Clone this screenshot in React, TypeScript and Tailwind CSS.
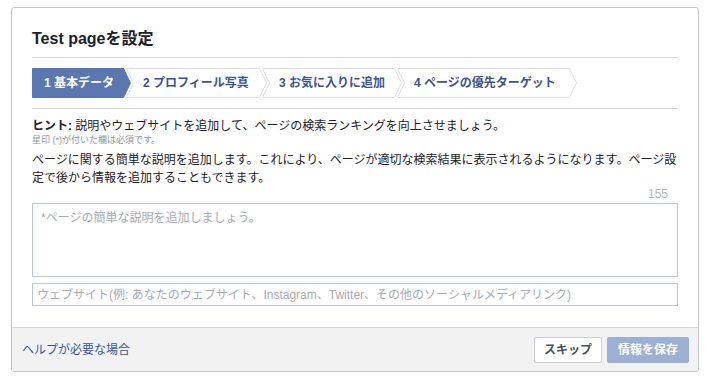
import React from "react";

type Step = { label: string; width: number };

const steps: Step[] = [
  { label: "1 基本データ", width: 99 },
  { label: "2 プロフィール写真", width: 141 },
  { label: "3 お気に入りに追加", width: 140 },
  { label: "4 ページの優先ターゲット", width: 180 },
];

const font = { fontFamily: '"Liberation Sans", Arial, "Noto Sans CJK JP", sans-serif' };

function StepShape({ width, first, active }: { width: number; first: boolean; active: boolean }) {
  const w = width;
  const pts = first
    ? `0.5,0.5 ${w - 7.5},0.5 ${w - 0.5},15 ${w - 7.5},29.5 0.5,29.5`
    : `0.5,0.5 ${w - 7.5},0.5 ${w - 0.5},15 ${w - 7.5},29.5 0.5,29.5 7.5,15`;
  return (
    <svg className="absolute inset-0" width={w} height={30} viewBox={`0 0 ${w} 30`}>
      <polygon
        points={pts}
        fill={active ? "#5b77b0" : "#ffffff"}
        stroke={active ? "#5b77b0" : "#dddfe2"}
        strokeWidth={1}
      />
    </svg>
  );
}

export default function App() {
  return (
    <div className="min-h-[384px] bg-white pl-[11px] pt-[7px]" style={font}>
      <div className="w-[688px] overflow-hidden rounded-[3px] border border-[#c5c6c8] bg-white">
        <div className="px-[20px]">
          <h1 className="border-b border-[#d3d6db] pb-[8px] pt-[21px] text-[16px] font-bold leading-[20px] text-[#1d2129]">
            Test pageを設定
          </h1>

          <div className="flex border-b border-[#d3d6db] pb-[10px] pt-[10px]">
            {steps.map((s, i) => (
              <div
                key={s.label}
                className={`relative flex h-[30px] shrink-0 items-center ${i === 0 ? "pl-[12px]" : "-ml-[5px] pl-[17px]"}`}
                style={{ width: s.width }}
              >
                <StepShape width={s.width} first={i === 0} active={i === 0} />
                <span
                  className={`relative whitespace-nowrap text-[12px] font-bold ${i === 0 ? "text-white" : "text-[#3f5488]"}`}
                >
                  {s.label}
                </span>
              </div>
            ))}
          </div>

          <p className="mt-[10px] text-[12px] leading-[15px] text-[#1d2129]">
            <span className="font-bold">ヒント:</span> 説明やウェブサイトを追加して、ページの検索ランキングを向上させましょう。
          </p>
          <p className="text-[9px] leading-[12px] text-[#90949c]">星印 (*)が付いた欄は必須です。</p>

          <p className="mt-[5px] text-[12px] leading-[18px] text-[#1d2129]">
            ページに関する簡単な説明を追加します。これにより、ページが適切な検索結果に表示されるようになります。ページ設定で後から情報を追加することもできます。
          </p>

          <div className="pr-[10px] text-right text-[12px] leading-[14px] text-[#b4b8bf]">155</div>

          <textarea
            className="mt-[2px] block h-[74px] w-full resize-none border border-[#bdc7d8] px-[8px] py-[6px] text-[12px] leading-[16px] text-[#1d2129] outline-none placeholder:text-[#a7abb2]"
            placeholder="*ページの簡単な説明を追加しましょう。"
          />
          <input
            className="mt-[6px] block h-[23px] w-full border border-[#bdc7d8] px-[4px] text-[12px] text-[#1d2129] outline-none placeholder:text-[#a7abb2]"
            placeholder="ウェブサイト(例: あなたのウェブサイト、Instagram、Twitter、その他のソーシャルメディアリンク)"
          />
        </div>

        <div className="mt-[21px] flex h-[44px] items-center justify-between border-t border-[#d3d6db] bg-[#f2f2f2] pl-[10px] pr-[9px]">
          <a className="text-[12px] text-[#365899]">ヘルプが必要な場合</a>
          <div className="flex gap-[5px]">
            <button className="h-[26px] w-[68px] rounded-[2px] border border-[#ccd0d5] bg-white text-[12px] font-bold text-[#4b4f56]">
              スキップ
            </button>
            <button className="h-[26px] w-[82px] rounded-[2px] border border-[#9cb0d3] bg-[#9cb0d3] text-[12px] font-bold text-white">
              情報を保存
            </button>
          </div>
        </div>
      </div>
    </div>
  );
}
